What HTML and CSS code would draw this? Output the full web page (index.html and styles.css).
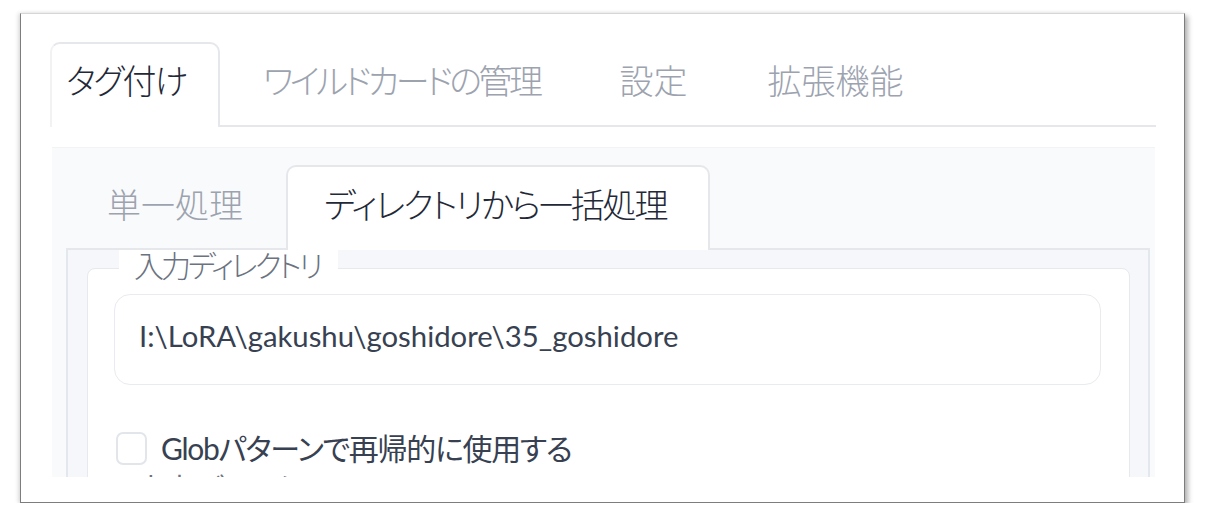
FILE: index.html
```html
<!doctype html>
<html>
  <head>
    <title>タグ付け</title>
    <link rel="stylesheet" href="styles.css">
  </head>
  <body>
    <div class="shot">
      <div class="viewport">
        <div class="tab-nav">
          <button class="tab selected first">タグ付け</button>
          <button class="tab tight">ワイルドカードの管理</button>
          <button class="tab wide">設定</button>
          <button class="tab wide">拡張機能</button>
        </div>

        <div class="tab-panel">
          <div class="tab-nav sub-nav">
            <button class="tab wide">単一処理</button>
            <button class="tab selected">ディレクトリから一括処理</button>
          </div>

          <div class="sub-panel">
            <div class="block">
              <span class="block-label">入力ディレクトリ</span>
              <div class="textbox">I:\LoRA\gakushu\goshidore\35_goshidore</div>
              <label class="check">
                <span class="check-box"></span>
                <span>Globパターンで再帰的に使用する</span>
              </label>
              <div class="next-label">出力ディレクトリ</div>
            </div>
          </div>
        </div>
      </div>
    </div>
  </body>
</html>
```

FILE: styles.css
```css
body {
  margin: 0;
  background-color: #fff;
  font-family: "Lato", "Noto Sans CJK JP", sans-serif;
  font-feature-settings: "palt";
}
.shot {
  box-sizing: border-box;
  width: 1165px;
  height: 490px;
  margin: 13px 0 0 20px;
  padding: 28px 28px 0 29px;
  background-color: #fff;
  border: 1px solid #7d7d7d;
  border-top-color: #d6d6d6;
  box-shadow: 3px 3px 5px rgba(0, 0, 0, 0.3), -2px 0 4px rgba(0, 0, 0, 0.12);
}
.viewport {
  height: 435px;
  overflow: hidden;
}
.tab-nav {
  display: flex;
  height: 83px;
  border-bottom: 2px solid #e5e7eb;
}
.tab {
  box-sizing: border-box;
  font-family: inherit;
  font-feature-settings: "palt";
  font-size: 34px;
  font-weight: 300;
  letter-spacing: -2px;
  color: #9ca3af;
  background: none;
  border: 2px solid transparent;
  border-bottom: none;
  padding: 0 38px 12px;
  height: 85px;
  margin-bottom: -2px;
  cursor: pointer;
  white-space: nowrap;
}
.tab.tight {
  letter-spacing: -3.5px;
  padding-left: 41px;
}
.tab.wide {
  letter-spacing: 0;
}
.tab.selected {
  color: #1f2937;
  background-color: #fff;
  border-color: #e5e7eb;
  border-radius: 10px 10px 0 0;
}
.tab.first {
  width: 170px;
  padding-left: 14px;
  padding-right: 0;
  text-align: left;
  border-left-color: #f1f2f4;
}
.tab-panel {
  margin: 20px 1px 0 2px;
  padding: 17px 5px 0 14px;
  background-color: #f9fafb;
  border-top: 1px solid #f2f3f5;
}
.sub-nav .tab {
  padding: 0 41px 10px 39px;
}
.sub-nav .tab.selected {
  padding: 0 42px 10px 36px;
  letter-spacing: -2.2px;
}
.sub-panel {
  padding: 18px 18px 40px 19px;
  background-color: #f5f7fa;
  border: 2px solid #e3e8ee;
  border-top: none;
}
.block {
  position: relative;
  padding: 25px 28px 20px 26px;
  background-color: #fff;
  border: 1px solid #e6e9ee;
  border-radius: 8px;
}
.block-label {
  position: absolute;
  top: -19px;
  left: 31px;
  height: 30px;
  padding: 0 18px 0 15px;
  line-height: 30px;
  font-size: 30px;
  font-weight: 300;
  letter-spacing: -3px;
  white-space: nowrap;
  color: #6b7280;
  background-color: #fff;
}
.textbox {
  display: flex;
  align-items: center;
  box-sizing: border-box;
  height: 91px;
  padding: 0 0 8px 24px;
  font-size: 29.3px;
  color: #374151;
  border: 1px solid #e8ebef;
  border-radius: 16px;
}
.check {
  display: flex;
  align-items: center;
  gap: 14px;
  margin-top: 47px;
  margin-left: 2px;
  font-size: 30px;
  line-height: 33px;
  letter-spacing: -1.3px;
  color: #374151;
}
.check-box {
  box-sizing: border-box;
  width: 31px;
  height: 33px;
  border: 2px solid #e2e5ea;
  border-radius: 7px;
}
.next-label {
  margin: 6px 0 0 22px;
  font-size: 30px;
  line-height: 34px;
  color: #6b7280;
}
```
